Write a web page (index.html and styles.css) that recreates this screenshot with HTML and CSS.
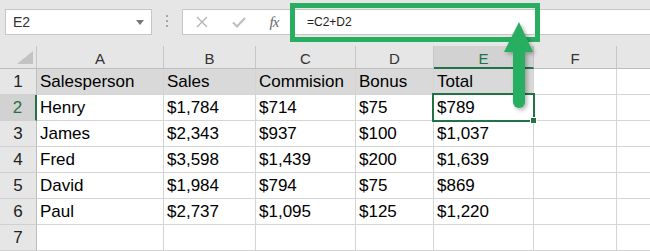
FILE: index.html
```html
<!DOCTYPE html>
<html>
<head>
<meta charset="utf-8">
<link rel="stylesheet" href="styles.css">
</head>
<body>
<div class="app">

  <div class="bar">
    <div class="namebox">
      <span>E2</span>
      <span class="caret"></span>
    </div>
    <div class="grip"><i></i><i></i><i></i></div>
    <div class="formula">
      <div class="fbtn">
        <svg width="12" height="12" viewBox="0 0 12 12"><path d="M1 1 L11 11 M11 1 L1 11" stroke="#b4b4b4" stroke-width="1.4" fill="none"/></svg>
      </div>
      <div class="fbtn">
        <svg width="14" height="11" viewBox="0 0 14 11"><path d="M1 5.5 L5 9.5 L13 1" stroke="#bcbcbc" stroke-width="2" fill="none"/></svg>
      </div>
      <div class="fbtn fx">fx</div>
      <div class="finput">=C2+D2</div>
    </div>
  </div>

  <div class="sheet">
    <!-- column headers -->
    <div class="ch corner">
      <svg width="36" height="22"><polygon points="17,18 33,18 33,5" fill="#c3c3c3"/></svg>
    </div>
    <div class="ch">A</div>
    <div class="ch">B</div>
    <div class="ch">C</div>
    <div class="ch">D</div>
    <div class="ch cur">E</div>
    <div class="ch">F</div>
    <div class="ch last"></div>

    <!-- row 1 -->
    <div class="rh">1</div>
    <div class="c hd">Salesperson</div>
    <div class="c hd">Sales</div>
    <div class="c hd">Commision</div>
    <div class="c hd">Bonus</div>
    <div class="c hd">Total</div>
    <div class="c"></div>
    <div class="c last"></div>

    <!-- row 2 -->
    <div class="rh cur">2</div>
    <div class="c">Henry</div>
    <div class="c">$1,784</div>
    <div class="c">$714</div>
    <div class="c">$75</div>
    <div class="c active">$789</div>
    <div class="c"></div>
    <div class="c last"></div>

    <!-- row 3 -->
    <div class="rh">3</div>
    <div class="c">James</div>
    <div class="c">$2,343</div>
    <div class="c">$937</div>
    <div class="c">$100</div>
    <div class="c">$1,037</div>
    <div class="c"></div>
    <div class="c last"></div>

    <!-- row 4 -->
    <div class="rh">4</div>
    <div class="c">Fred</div>
    <div class="c">$3,598</div>
    <div class="c">$1,439</div>
    <div class="c">$200</div>
    <div class="c">$1,639</div>
    <div class="c"></div>
    <div class="c last"></div>

    <!-- row 5 -->
    <div class="rh">5</div>
    <div class="c">David</div>
    <div class="c">$1,984</div>
    <div class="c">$794</div>
    <div class="c">$75</div>
    <div class="c">$869</div>
    <div class="c"></div>
    <div class="c last"></div>

    <!-- row 6 -->
    <div class="rh">6</div>
    <div class="c">Paul</div>
    <div class="c">$2,737</div>
    <div class="c">$1,095</div>
    <div class="c">$125</div>
    <div class="c">$1,220</div>
    <div class="c"></div>
    <div class="c last"></div>

    <!-- row 7 -->
    <div class="rh">7</div>
    <div class="c"></div>
    <div class="c"></div>
    <div class="c"></div>
    <div class="c"></div>
    <div class="c"></div>
    <div class="c"></div>
    <div class="c last"></div>
  </div>

  <!-- annotation: box round the formula and arrow pointing at it -->
  <div class="callout"></div>
  <svg class="arrow" width="44" height="96" viewBox="0 0 44 96">
    <polygon points="21,4 35,34 6,34" fill="#27ae60"/>
    <rect x="15" y="28" width="12" height="62" rx="6" fill="#27ae60"/>
  </svg>

</div>
</body>
</html>
```

FILE: styles.css
```css
html, body
{
  margin: 0;
  padding: 0;
}

.app
{
  position: relative;
  width: 650px;
  height: 251px;
  overflow: hidden;
  background: #e6e6e6;
  font-family: "Liberation Sans", Arial, sans-serif;
  color: #000;
}

/* ---- formula bar ---- */

.bar
{
  display: flex;
  align-items: flex-start;
  height: 46px;
  padding-top: 9px;
  box-sizing: border-box;
}

.namebox
{
  margin-left: 5px;
  width: 147px;
  height: 26px;
  box-sizing: border-box;
  border: 1px solid #c6c6c6;
  background: #fff;
  display: flex;
  align-items: center;
  justify-content: space-between;
  padding: 0 7px 0 7px;
  font-size: 14px;
  color: #333;
}

.caret
{
  width: 0;
  height: 0;
  border-left: 4px solid transparent;
  border-right: 4px solid transparent;
  border-top: 5px solid #777;
}

.grip
{
  width: 30px;
  display: flex;
  flex-direction: column;
  align-items: center;
  gap: 3px;
  padding-top: 6px;
}

.grip i
{
  width: 2px;
  height: 2px;
  background: #a6a6a6;
}

.formula
{
  flex: 1;
  height: 26px;
  box-sizing: border-box;
  border: 1px solid #c6c6c6;
  border-right: none;
  background: #fff;
  display: flex;
  align-items: center;
}

.fbtn
{
  width: 37px;
  display: flex;
  justify-content: center;
  align-items: center;
}

.fx
{
  width: 34px;
  font: italic 15px "Liberation Serif", serif;
  color: #6a6a6a;
  letter-spacing: -1px;
}

.finput
{
  padding-left: 16px;
  font-size: 12px;
  color: #222;
}

/* ---- sheet grid ---- */

.sheet
{
  display: grid;
  grid-template-columns: 37px 127px 92px 100px 78px 100px 83px 1fr;
  grid-template-rows: 23px repeat(7, 26px);
}

.ch
{
  background: #e6e6e6;
  border-right: 1px solid #c6c6c6;
  border-bottom: 1px solid #bdbdbd;
  display: flex;
  align-items: flex-end;
  justify-content: center;
  padding-bottom: 1px;
  box-sizing: border-box;
  font-size: 15px;
  color: #333;
}

.ch.corner
{
  display: block;
  padding: 0;
}

.ch.cur
{
  background: #d2d2d2;
  color: #217346;
  border-bottom: 2px solid #217346;
  padding-bottom: 0;
}

.ch.last
{
  border-right: none;
}

.rh
{
  background: #e6e6e6;
  border-right: 1px solid #bdbdbd;
  border-bottom: 1px solid #d0d0d0;
  display: flex;
  align-items: flex-end;
  justify-content: center;
  padding-bottom: 2px;
  box-sizing: border-box;
  font-size: 17px;
  color: #222;
}

.rh.cur
{
  background: #d2d2d2;
  color: #217346;
  border-right: 2px solid #217346;
}

.c
{
  background: #fff;
  border-right: 1px solid #d4d4d4;
  border-bottom: 1px solid #d4d4d4;
  padding: 0 0 2px 3px;
  box-sizing: border-box;
  display: flex;
  align-items: flex-end;
  font-size: 17px;
  white-space: nowrap;
}

.c.hd
{
  background: #d9d9d9;
}

.c.last
{
  border-right: none;
}

/* active cell with fill handle */
.c.active
{
  position: relative;
}

.c.active::after
{
  content: "";
  position: absolute;
  left: -2px;
  top: -2px;
  right: -2px;
  bottom: -2px;
  border: 2px solid #217346;
}

.c.active::before
{
  content: "";
  position: absolute;
  right: -4px;
  bottom: -4px;
  width: 5px;
  height: 5px;
  background: #217346;
  border: 1px solid #fff;
  z-index: 1;
}

/* ---- annotation ---- */

.callout
{
  position: absolute;
  left: 290px;
  top: 3px;
  width: 250px;
  height: 39px;
  box-sizing: border-box;
  border: 5px solid #27ae60;
}

.arrow
{
  position: absolute;
  left: 498px;
  top: 18px;
  filter: drop-shadow(2px 2px 2px rgba(0, 0, 0, 0.3));
}
```
